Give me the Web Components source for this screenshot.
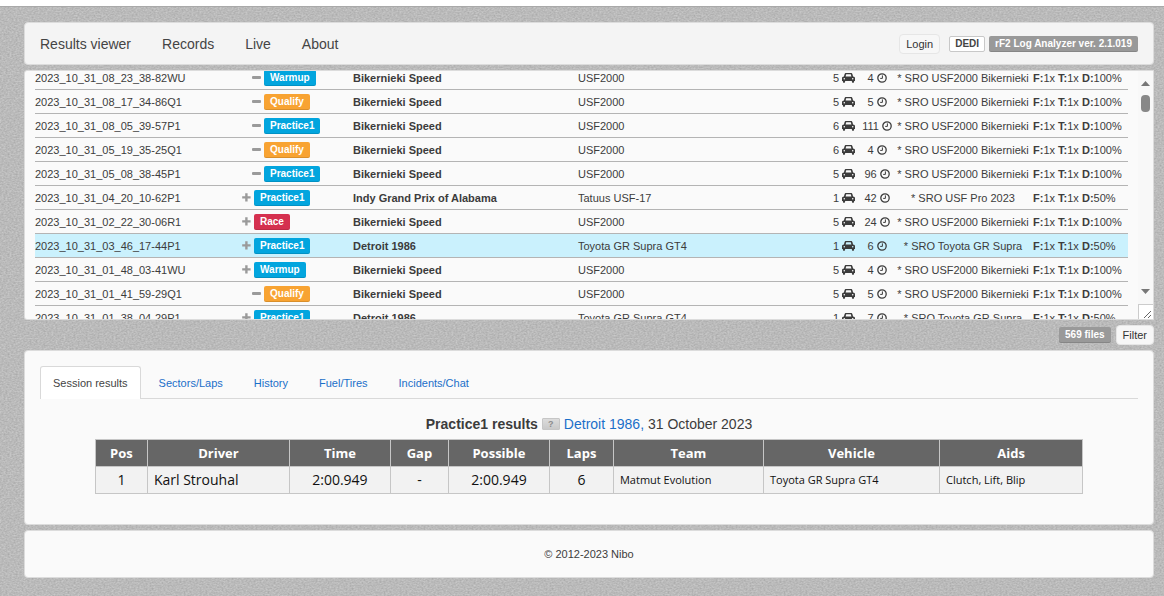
<!DOCTYPE html>
<html lang="en">
<head>
<meta charset="utf-8">
<title>rF2 Log Analyzer</title>
<style>
  html { background: #fff; }
  body { margin: 0; font: 11px/16px "Liberation Sans", Arial, sans-serif; color: #3c3c3c; }
</style>
</head>
<body>
<log-app></log-app>

<template id="t-app">
  <style>
    :host {
      display: block; box-sizing: border-box; min-height: calc(100vh - 6px); margin-top: 6px;
      padding: 15px 10px 18px 24px; border-top: 1px solid #a9a9a9;
      background: #bbb url("data:image/svg+xml,%3Csvg xmlns='http://www.w3.org/2000/svg' width='200' height='200'%3E%3Cfilter id='n' x='0' y='0' width='1' height='1' color-interpolation-filters='sRGB'%3E%3CfeTurbulence type='fractalNoise' baseFrequency='.5 .7' numOctaves='2' stitchTiles='stitch'/%3E%3CfeColorMatrix values='.18 0 0 0 .64 .18 0 0 0 .64 .18 0 0 0 .64 0 0 0 0 1'/%3E%3C/filter%3E%3Crect width='200' height='200' filter='url(%23n)'/%3E%3C/svg%3E");
    }
    .stack { display: flex; flex-direction: column; gap: 5px; }
    .tools { display: flex; justify-content: flex-end; align-items: center; gap: 5px; }
    footer { text-align: center; padding: 15px; }
  </style>
  <div class="stack">
    <site-header></site-header>
    <log-list></log-list>
    <div class="tools"><tag-label kind="gray">569 files</tag-label><soft-button>Filter</soft-button></div>
    <card-panel><session-panel></session-panel></card-panel>
    <card-panel><footer>© 2012-2023 Nibo</footer></card-panel>
  </div>
</template>

<template id="t-card">
  <style>
    :host { display: block; background: #fafafa; border: 1px solid #dcdcdc; border-radius: 4px; }
  </style>
  <slot></slot>
</template>

<template id="t-button">
  <style>
    :host { display: block; }
    button {
      display: block; box-sizing: border-box; height: 20px; margin: 0; padding: 0 6px; font: inherit; line-height: 18px; color: #333;
      background: #f7f7f7; border: 1px solid #e6e6e6; border-radius: 4px; cursor: pointer;
    }
  </style>
  <button type="button"><slot></slot></button>
</template>

<template id="t-tag">
  <style>
    :host {
      display: inline-block; box-sizing: border-box; height: 16px; padding: 0 6px; border-radius: 2px;
      font-weight: bold; font-size: 10px; line-height: 16px; color: #fff; white-space: nowrap;
      box-shadow: inset 0 -1px rgba(0,0,0,.12); background: #02a5de;
    }
    :host([kind="orange"]) { background: #f8a332; }
    :host([kind="red"]) { background: #d5304f; }
    :host([kind="gray"]) { background: #999; }
    :host([kind="plain"]) { background: #fff; color: #444; border: 1px solid #c8c8c8; line-height: 14px; padding: 0 5px; box-shadow: none; }
  </style>
  <slot></slot>
</template>

<template id="t-header">
  <style>
    :host { display: flex; align-items: center; justify-content: space-between; box-sizing: border-box; min-height: 43px; padding: 0 15px; background: #f4f4f4; border: 1px solid #dcdcdc; border-radius: 4px; }
    nav { display: flex; gap: 31px; font-size: 14px; line-height: 18px; }
    a { color: #444; text-decoration: none; }
    .right { display: flex; align-items: center; }
    soft-button { margin-right: 9px; }
    tag-label + tag-label { margin-left: 4px; }
  </style>
  <nav><a href="#results">Results viewer</a><a href="#records">Records</a><a href="#live">Live</a><a href="#about">About</a></nav>
  <div class="right"><soft-button>Login</soft-button><tag-label kind="plain">DEDI</tag-label><tag-label kind="gray">rF2 Log Analyzer ver. 2.1.019</tag-label></div>
</template>

<template id="t-list">
  <style>
    :host { display: flex; box-sizing: border-box; height: 250px; overflow: hidden; background: #fafafa; border: 1px solid #dcdcdc; border-radius: 3px 0 0 3px; }
    .scroll { flex: 1; overflow-y: auto; scrollbar-width: none; padding: 0 10px; }
    table { width: 100%; table-layout: fixed; border-collapse: separate; border-spacing: 0; }
    td { box-sizing: border-box; height: 24px; padding: 0; border-bottom: 1px solid #b4b4b4; white-space: nowrap; line-height: 16px; vertical-align: middle; }
    tr.on td { background: #caf1fd; }
    .c { text-align: center; }
    .sess { display: flex; align-items: center; gap: 3px; }
    .sess.sub { padding-left: 10px; }
    .n { display: inline-flex; align-items: center; gap: 3px; }
    svg { display: block; }
    .bar { flex: none; width: 15px; display: flex; flex-direction: column; align-items: center; background: #f8f8f8; }
    .up { margin-top: 10px; }
    .thumb { width: 9px; height: 17px; border-radius: 4px; background: #888; margin-top: 9px; }
    .down { margin-top: auto; }
    .grip { box-sizing: border-box; width: 15px; height: 15px; margin-top: 10px; background: #fff; border: 1px solid #ccc; border-width: 1px 0 0 1px; }
  </style>
  <div class="scroll">
    <table>
      <colgroup><col style="width:207px"><col style="width:111px"><col style="width:225px"><col><col style="width:34px"><col style="width:32px"><col style="width:140px"><col style="width:95px"></colgroup>
      <tbody></tbody>
    </table>
  </div>
  <div class="bar">
    <svg class="up" width="9" height="5" viewBox="0 0 9 5"><path d="M4.500 0 9 5H0z" fill="#777"/></svg>
    <div class="thumb"></div>
    <svg class="down" width="9" height="5" viewBox="0 0 9 5"><path d="M0 0h9L4.500 5z" fill="#777"/></svg>
    <div class="grip"><svg width="14" height="14" viewBox="0 0 14 14"><path d="M5 13 12 6M9 13l3-3" stroke="#666" fill="none"/></svg></div>
  </div>
</template>

<template id="t-icon">
  <style>
    :host { display: block; color: #9a9a9a; }
    :host([name="car"]), :host([name="clock"]) { color: #3c3c3c; }
    svg { display: block; }
  </style>
</template>

<template id="t-session">
  <style>
    :host { display: block; padding: 15px 15px 30px; }
    .tabs { display: flex; gap: 5px; border-bottom: 1px solid #d9d9d9; }
    .tabs a { padding: 8px 12px; border: 1px solid transparent; border-bottom: 0; border-radius: 3px 3px 0 0; margin-bottom: -1px; color: #1a6fc9; text-decoration: none; }
    .tabs a.on { color: #444; background: #fff; border-color: #d9d9d9; }
    h2 { display: flex; justify-content: center; align-items: center; gap: 4px; margin: 15px 0 5px; font-size: 14px; line-height: 20px; font-weight: normal; color: #3c3c3c; }
    h2 a { color: #1a6fc9; text-decoration: none; }
    h2 button { width: 18px; height: 12px; padding: 0; border: 1px solid #c6c6c6; border-radius: 1px; background: linear-gradient(#dcdcdc, #c9c9c9); font: bold 9px/10px "Liberation Sans", Arial, sans-serif; color: #8c8c8c; }
    table { width: 90%; margin: 0 auto; table-layout: fixed; border-collapse: collapse; font: 14px/20px "Trebuchet MS", "Open Sans", sans-serif; color: #111; }
    th, td { box-sizing: border-box; height: 27px; border: 1px solid #c6c6c6; padding: 0 6px; text-align: center; white-space: nowrap; }
    th { background: #666; color: #fff; font-size: 13px; }
    td { background: #f2f2f2; }
    td.l { text-align: left; }
    td.s { text-align: left; font-size: 11px; }
  </style>
  <div class="tabs"><a class="on" href="#session">Session results</a><a href="#sectors">Sectors/Laps</a><a href="#history">History</a><a href="#fuel">Fuel/Tires</a><a href="#incidents">Incidents/Chat</a></div>
  <h2><b>Practice1 results</b><button type="button">?</button><span><a href="#track">Detroit 1986,</a> 31 October 2023</span></h2>
  <table>
    <colgroup><col style="width:52px"><col style="width:142px"><col style="width:101px"><col style="width:58px"><col style="width:101px"><col style="width:64px"><col style="width:150px"><col style="width:176px"><col style="width:143px"></colgroup>
    <thead><tr><th>Pos</th><th>Driver</th><th>Time</th><th>Gap</th><th>Possible</th><th>Laps</th><th>Team</th><th>Vehicle</th><th>Aids</th></tr></thead>
    <tbody><tr><td>1</td><td class="l">Karl Strouhal</td><td>2:00.949</td><td>-</td><td>2:00.949</td><td>6</td><td class="s">Matmut Evolution</td><td class="s">Toyota GR Supra GT4</td><td class="s">Clutch, Lift, Blip</td></tr></tbody>
  </table>
</template>

<script>
  class Base extends HTMLElement {
    constructor() {
      super();
      this.attachShadow({ mode: 'open' })
        .append(document.getElementById(this.constructor.tpl).content.cloneNode(true));
    }
  }
  const define = (name, tpl) => customElements.define(name, class extends Base { static tpl = tpl; });

  const icons = {
    plus: '<svg width="9" height="9" viewBox="0 0 9 9"><path d="M3.2.3h2.400v2.900h3v2.400h-3v3H3.200v-3H.2V3.200h3z" fill="currentColor"/></svg>',
    minus: '<svg width="9" height="9" viewBox="0 0 9 9"><rect y="3" width="9" height="3" rx="1" fill="currentColor"/></svg>',
    clock: '<svg width="10" height="10" viewBox="0 0 10 10"><g fill="none" stroke="currentColor"><circle cx="5" cy="5" r="4.200" stroke-width="1.300"/><path d="M5.400 2.400v3H3.200" stroke-width="1"/></g></svg>',
    car: '<svg width="13" height="10" viewBox="0 0 13 10"><path fill="currentColor" fill-rule="evenodd" d="M4 0h5c.8 0 1.200.4 1.400 1.100l.7 2.500C12.300 3.700 13 4.400 13 5.400v2.500h-.9v.9c0 1.500-2.200 1.500-2.200 0v-.9H3.100v.9c0 1.500-2.200 1.500-2.200 0v-.9H0V5.400C0 4.400.7 3.700 1.900 3.600l.7-2.500C2.800.4 3.200 0 4 0zM4.200 1.300 3.600 3.500h5.800l-.6-2.200zM2.300 4.900a.8.8 0 1 0 0 1.600.8.8 0 0 0 0-1.600zM10.700 4.900a.8.8 0 1 0 0 1.600.8.8 0 0 0 0-1.600z"/></svg>'
  };
  customElements.define('glyph-icon', class extends Base {
    static tpl = 't-icon';
    connectedCallback() { this.shadowRoot.append(document.createRange().createContextualFragment(icons[this.getAttribute('name')])); }
  });

  const B = ['Bikernieki Speed', 'USF2000'], D = ['Detroit 1986', 'Toyota GR Supra GT4'];
  const SB = ['* SRO USF2000 Bikernieki', '100%'], SD = ['* SRO Toyota GR Supra', '50%'];
  const rows = [
    ['2023_10_31_08_23_38-82WU', 'minus', 'Warmup', ...B, 5, 4, ...SB],
    ['2023_10_31_08_17_34-86Q1', 'minus', 'Qualify', ...B, 5, 5, ...SB],
    ['2023_10_31_08_05_39-57P1', 'minus', 'Practice1', ...B, 6, 111, ...SB],
    ['2023_10_31_05_19_35-25Q1', 'minus', 'Qualify', ...B, 6, 4, ...SB],
    ['2023_10_31_05_08_38-45P1', 'minus', 'Practice1', ...B, 5, 96, ...SB],
    ['2023_10_31_04_20_10-62P1', 'plus', 'Practice1', 'Indy Grand Prix of Alabama', 'Tatuus USF-17', 1, 42, '* SRO USF Pro 2023', '50%'],
    ['2023_10_31_02_22_30-06R1', 'plus', 'Race', ...B, 5, 24, ...SB],
    ['2023_10_31_03_46_17-44P1', 'plus', 'Practice1', ...D, 1, 6, ...SD],
    ['2023_10_31_01_48_03-41WU', 'plus', 'Warmup', ...B, 5, 4, ...SB],
    ['2023_10_31_01_41_59-29Q1', 'minus', 'Qualify', ...B, 5, 5, ...SB],
    ['2023_10_31_01_38_04-29P1', 'plus', 'Practice1', ...D, 1, 7, ...SD]
  ];
  const kinds = { Qualify: 'orange', Race: 'red' };
  customElements.define('log-list', class extends Base {
    static tpl = 't-list';
    connectedCallback() {
      this.shadowRoot.querySelector('tbody').innerHTML = rows.map(([file, icon, type, track, car, cars, laps, server, dmg], i) => `
        <tr class="${i === 7 ? 'on' : ''}"><td>${file}</td>
        <td><div class="sess ${icon === 'minus' ? 'sub' : ''}"><glyph-icon name="${icon}"></glyph-icon><tag-label kind="${kinds[type] || 'blue'}">${type}</tag-label></div></td>
        <td><b>${track}</b></td><td>${car}</td>
        <td class="c"><span class="n">${cars}<glyph-icon name="car"></glyph-icon></span></td>
        <td class="c"><span class="n">${laps}<glyph-icon name="clock"></glyph-icon></span></td>
        <td class="c">${server}</td><td><b>F:</b>1x <b>T:</b>1x <b>D:</b>${dmg}</td></tr>`).join('');
      this.shadowRoot.querySelector('.scroll').scrollTop = 5;
    }
  });
  define('card-panel', 't-card');
  define('soft-button', 't-button');
  define('tag-label', 't-tag');
  define('site-header', 't-header');
  define('session-panel', 't-session');
  define('log-app', 't-app');
</script>
</body>
</html>
